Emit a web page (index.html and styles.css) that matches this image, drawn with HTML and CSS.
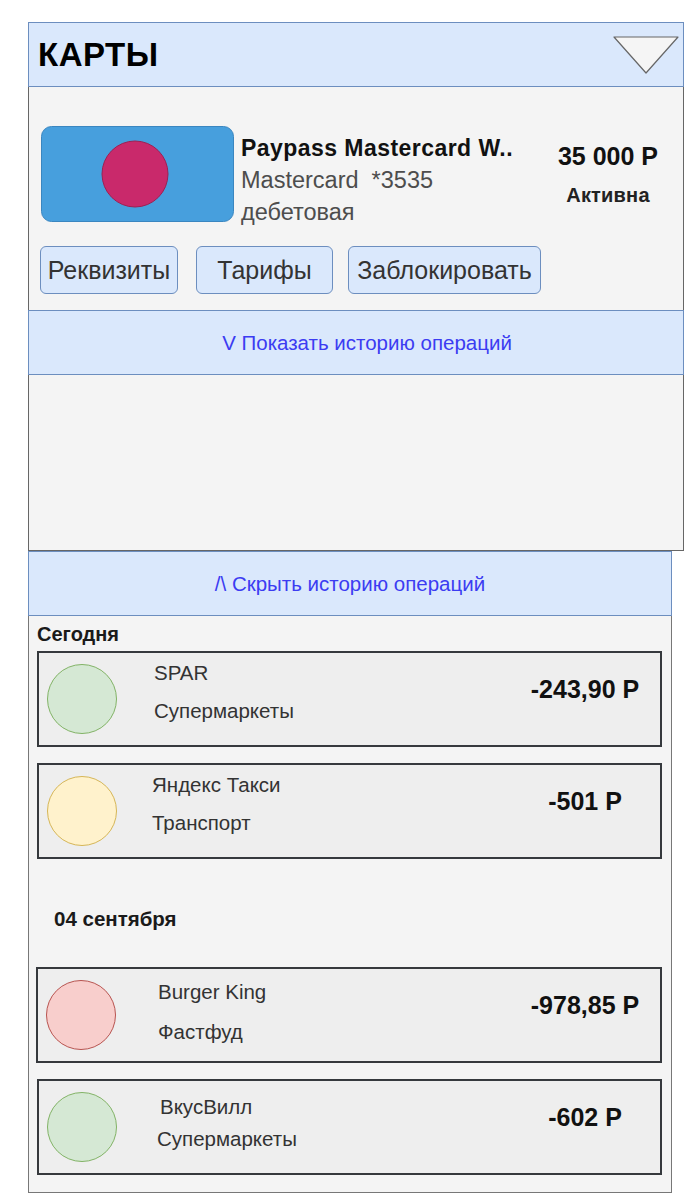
FILE: index.html
```html
<!DOCTYPE html>
<html lang="ru">
<head>
<meta charset="utf-8">
<title>Карты</title>
<link rel="stylesheet" href="styles.css">
</head>
<body>
<div class="page">
  <section class="panel panel-cards">
    <header class="panel-head">
      <h1 class="panel-title">КАРТЫ</h1>
      <svg class="collapse-icon" width="66" height="38" viewBox="0 0 66 38" aria-hidden="true">
        <polygon points="1,1 65,1 33,37" fill="#f5f5f5" stroke="#666666" stroke-width="1.2" stroke-linejoin="round"/>
      </svg>
    </header>
    <div class="card-body">
      <div class="card-row">
        <div class="card-pic">
          <svg width="193" height="96" viewBox="0 0 193 96" aria-hidden="true">
            <rect x="0.5" y="0.5" width="192" height="95" rx="10" ry="10" fill="#479fdd" stroke="#3a86c0"/>
            <circle cx="94" cy="48" r="33" fill="#c9296b" stroke="#9e1f52" stroke-width="1"/>
          </svg>
        </div>
        <div class="card-info">
          <div class="card-name">Paypass Mastercard W..</div>
          <div class="card-sub">Mastercard&nbsp; *3535</div>
          <div class="card-sub">дебетовая</div>
        </div>
        <div class="card-balance">
          <div class="balance">35 000 Р</div>
          <div class="status">Активна</div>
        </div>
      </div>
      <div class="card-actions">
        <button class="btn btn-req">Реквизиты</button>
        <button class="btn btn-tar">Тарифы</button>
        <button class="btn btn-block">Заблокировать</button>
      </div>
    </div>
    <div class="toggle-bar toggle-show">V Показать историю операций</div>
    <div class="empty-area"></div>
  </section>

  <section class="panel panel-history">
    <div class="toggle-bar toggle-hide">/\ Скрыть историю операций</div>
    <div class="history-body">
      <div class="day-label">Сегодня</div>
      <div class="op">
        <span class="op-dot dot-green"></span>
        <div class="op-text">
          <div class="op-name">SPAR</div>
          <div class="op-cat">Супермаркеты</div>
        </div>
        <div class="op-sum">-243,90 Р</div>
      </div>
      <div class="op">
        <span class="op-dot dot-yellow"></span>
        <div class="op-text op-text-shift">
          <div class="op-name">Яндекс Такси</div>
          <div class="op-cat">Транспорт</div>
        </div>
        <div class="op-sum">-501 Р</div>
      </div>
      <div class="day-label day-label-indent">04 сентября</div>
      <div class="op op-shift">
        <span class="op-dot dot-red"></span>
        <div class="op-text op-text-wide">
          <div class="op-name">Burger King</div>
          <div class="op-cat">Фастфуд</div>
        </div>
        <div class="op-sum">-978,85 Р</div>
      </div>
      <div class="op">
        <span class="op-dot dot-green"></span>
        <div class="op-text op-text-tight">
          <div class="op-name op-name-indent">ВкусВилл</div>
          <div class="op-cat">Супермаркеты</div>
        </div>
        <div class="op-sum">-602 Р</div>
      </div>
    </div>
  </section>
</div>
</body>
</html>
```

FILE: styles.css
```css
* { box-sizing: border-box; }

html, body {
  margin: 0;
  padding: 0;
  background: #ffffff;
}

body {
  font-family: "Liberation Sans", Arial, sans-serif;
  color: #000;
}

.page {
  padding: 22px 0 0 28px;
}

.panel-cards {
  width: 656px;
}

.panel-history {
  width: 644px;
}

.panel-head {
  height: 65px;
  background: #dae8fc;
  border: 1px solid #6c8ebf;
  display: flex;
  align-items: center;
  justify-content: space-between;
  padding: 0 4px 0 9px;
}

.panel-title {
  margin: 0;
  font-size: 33px;
  font-weight: bold;
  line-height: 1;
  letter-spacing: 0.5px;
}

.collapse-icon {
  display: block;
}

.card-body {
  height: 223px;
  background: #f4f4f4;
  border-left: 1px solid #666;
  border-right: 1px solid #666;
  padding: 39px 0 0 11px;
}

.card-row {
  display: flex;
  align-items: flex-start;
  height: 96px;
}

.card-pic {
  margin-left: 1px;
  width: 193px;
  height: 96px;
}

.card-pic svg {
  display: block;
}

.card-info {
  flex: 1;
  margin: 6px 0 0 7px;
  line-height: 32px;
  white-space: nowrap;
}

.card-name {
  font-size: 23px;
  font-weight: bold;
  color: #111;
  letter-spacing: 0.45px;
}

.card-sub {
  font-size: 23.5px;
  color: #4d4d4d;
}

.card-balance {
  width: 130px;
  margin: 16px 10px 0 0;
  text-align: center;
}

.balance {
  font-size: 25px;
  font-weight: bold;
  line-height: 28px;
  color: #111;
}

.status {
  margin-top: 14px;
  font-size: 20px;
  font-weight: bold;
  line-height: 22px;
  color: #222;
  letter-spacing: 0.2px;
}

.card-actions {
  display: flex;
  margin-top: 24px;
}

.btn {
  height: 48px;
  padding: 0;
  background: #dae8fc;
  border: 1px solid #6c8ebf;
  border-radius: 6px;
  font-family: "Liberation Sans", Arial, sans-serif;
  font-size: 25px;
  color: #333;
}

.btn-req { width: 138px; }
.btn-tar { width: 137px; margin-left: 18px; }
.btn-block { width: 193px; margin-left: 15px; }

.toggle-bar {
  height: 65px;
  background: #dae8fc;
  border: 1px solid #6c8ebf;
  display: flex;
  align-items: center;
  justify-content: center;
  font-size: 20.5px;
  color: #3c3cf2;
}

.toggle-show {
  padding-left: 22px;
}

.empty-area {
  height: 176px;
  background: #f4f4f4;
  border: 1px solid #666;
  border-top: none;
}

.history-body {
  background: #f4f4f4;
  border: 1px solid #777;
  border-top: none;
  padding: 6px 9px 17px 8px;
}

.day-label {
  font-size: 20px;
  font-weight: bold;
  line-height: 24px;
  color: #1a1a1a;
  margin-bottom: 5px;
}

.day-label-indent {
  margin: 48px 0 36px 17px;
  font-size: 20.5px;
}

.op {
  height: 96px;
  background: #eeeeee;
  border: 2px solid #36393d;
  display: flex;
  align-items: flex-start;
  padding-left: 8px;
}

.op + .op {
  margin-top: 16px;
}

.op-shift {
  margin-left: -1px;
}

.op-dot {
  flex: none;
  width: 70px;
  height: 70px;
  margin-top: 11px;
  border-radius: 50%;
  border: 1.5px solid;
}

.dot-green { background: #d5e8d4; border-color: #82b366; }
.dot-yellow { background: #fff2cc; border-color: #d6b656; }
.dot-red { background: #f8cecc; border-color: #b85450; }

.op-text {
  flex: 1;
  margin-left: 37px;
  padding-top: 1px;
  line-height: 38px;
  font-size: 20.5px;
  color: #333;
}

.op-text-shift { margin-left: 35px; }
.op-text-wide { margin-left: 42px; line-height: 40px; padding-top: 3px; }
.op-text-tight { margin-left: 40px; line-height: 32px; padding-top: 10px; }

.op-name-indent { margin-left: 3px; }

.op-sum {
  width: 140px;
  margin: 21px 5px 0 0;
  text-align: center;
  font-size: 25px;
  font-weight: bold;
  line-height: 30px;
  color: #111;
}
```
